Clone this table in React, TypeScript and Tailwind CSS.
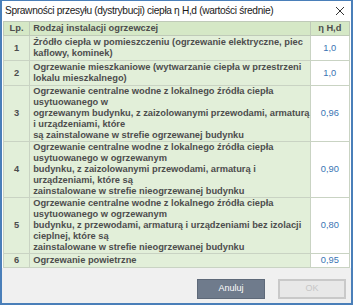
import React from 'react';

const rows = [
  {
    lp: '1',
    lines: ['Źródło ciepła w pomieszczeniu (ogrzewanie elektryczne, piec', 'kaflowy, kominek)'],
    value: '1,0',
  },
  {
    lp: '2',
    lines: ['Ogrzewanie mieszkaniowe (wytwarzanie ciepła w przestrzeni', 'lokalu mieszkalnego)'],
    value: '1,0',
  },
  {
    lp: '3',
    lines: [
      'Ogrzewanie centralne wodne z lokalnego źródła ciepła',
      'usytuowanego w',
      'ogrzewanym budynku, z zaizolowanymi przewodami, armaturą',
      'i urządzeniami, które',
      'są zainstalowane w strefie ogrzewanej budynku',
    ],
    value: '0,96',
  },
  {
    lp: '4',
    lines: [
      'Ogrzewanie centralne wodne z lokalnego źródła ciepła',
      'usytuowanego w ogrzewanym',
      'budynku, z zaizolowanymi przewodami, armaturą i',
      'urządzeniami, które są',
      'zainstalowane w strefie nieogrzewanej budynku',
    ],
    value: '0,90',
  },
  {
    lp: '5',
    lines: [
      'Ogrzewanie centralne wodne z lokalnego źródła ciepła',
      'usytuowanego w ogrzewanym',
      'budynku, z przewodami, armaturą i urządzeniami bez izolacji',
      'cieplnej, które są',
      'zainstalowane w strefie nieogrzewanej budynku',
    ],
    value: '0,80',
  },
  {
    lp: '6',
    lines: ['Ogrzewanie powietrzne'],
    value: '0,95',
  },
];

export default function App() {
  return (
    <div className="w-[353px] h-[305px] flex flex-col bg-[#f0f0f0] border-2 border-t border-[#4a7fb9] overflow-hidden font-['Liberation_Sans',Arial,sans-serif]">
      {/* Title bar */}
      <div className="h-[20px] shrink-0 bg-white flex items-center justify-between pl-[3px] pr-[6px]">
        <span className="text-[10.2px] text-[#1a1a1a] tracking-[-0.35px] whitespace-nowrap">
          Sprawności przesyłu (dystrybucji) ciepła η H,d (wartości średnie)
        </span>
        <svg width="10" height="10" viewBox="0 0 10 10" className="text-[#333]">
          <path d="M1 1 L9 9 M9 1 L1 9" stroke="currentColor" strokeWidth="1" />
        </svg>
      </div>

      {/* Table */}
      <div className="bg-white px-px">
        <table className="w-full border-collapse text-[9.3px] leading-[11px] text-[#4d4d4d] font-bold">
          <thead>
            <tr className="bg-[#d5e8c6]">
              <th className="w-[32px] border border-[#bfcab8] font-bold text-center py-px">Lp.</th>
              <th className="border border-[#bfcab8] font-bold text-left pl-[3px] py-px">Rodzaj instalacji ogrzewczej</th>
              <th className="w-[50px] border border-[#bfcab8] font-bold text-center py-px">η H,d</th>
            </tr>
          </thead>
          <tbody>
            {rows.map(row => (
              <tr key={row.lp}>
                <td className="bg-[#e2efd9] border border-[#c9d3c3] text-center align-middle">{row.lp}</td>
                <td
                  className={`bg-[#e2efd9] border border-[#c9d3c3] pl-[3px] whitespace-nowrap ${
                    row.lines.length > 2 ? 'py-0' : 'py-px'
                  }`}
                >
                  {row.lines.map((line, i) => (
                    <div key={i}>{line}</div>
                  ))}
                </td>
                <td className="bg-white border border-[#c9d3c3] text-center align-middle font-normal text-[#3a74b3]">
                  {row.value}
                </td>
              </tr>
            ))}
          </tbody>
        </table>
      </div>

      {/* Footer buttons */}
      <div className="flex-1 flex items-end justify-end gap-[13px] pr-[5px] pb-[4px]">
        <button className="w-[68px] h-[20px] bg-[#6f7b8c] border border-[#5e6979] text-white text-[9px]">
          Anuluj
        </button>
        <button className="w-[68px] h-[20px] bg-[#e8e8e8] border-2 border-[#c9c9c9] text-[#c6c6c6] text-[9px]">
          OK
        </button>
      </div>
    </div>
  );
}
